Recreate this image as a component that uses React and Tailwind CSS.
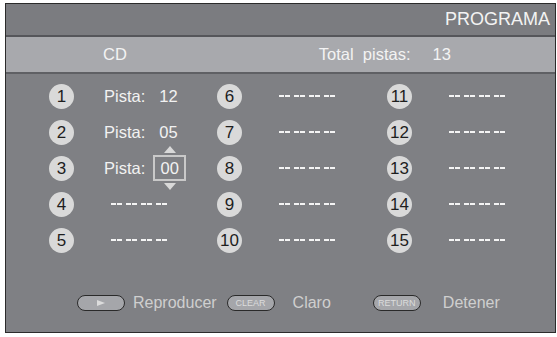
import React from "react";

const font = { fontFamily: '"Liberation Sans", Arial, sans-serif' };

function Circle({ n }) {
  return (
    <div className="w-[25px] h-[25px] rounded-full bg-[#d9d9d9] flex items-center justify-center text-[#1e1e1e] text-[17px] leading-none shrink-0">
      {n}
    </div>
  );
}

function Dashes() {
  return (
    <div className="flex gap-[4px] items-center">
      {[0, 1, 2, 3].map((i) => (
        <div key={i} className="flex gap-[1px]">
          <div className="w-[5px] h-[2px] bg-[#f4f4f4]" />
          <div className="w-[5px] h-[2px] bg-[#f4f4f4]" />
        </div>
      ))}
    </div>
  );
}

function Cell({ n, children, gap = "gap-[37px]" }) {
  return (
    <div className={`flex items-center h-[36px] ${gap}`}>
      <Circle n={n} />
      {children}
    </div>
  );
}

function Pill({ children, w }) {
  return (
    <div
      className={`h-[16px] ${w} rounded-full bg-[#a5a6aa] border border-[#2a2a2a] flex items-center justify-center text-[9px] text-[#dcdcdc] leading-none`}
    >
      {children}
    </div>
  );
}

export default function App() {
  const col1 = [
    <Cell key={1} n={1} gap="gap-[30px]">
      <div className="flex text-[#f2f2f2] text-[16.5px]">
        <span>Pista:</span>
        <span className="ml-[14px]">12</span>
      </div>
    </Cell>,
    <Cell key={2} n={2} gap="gap-[30px]">
      <div className="flex text-[#f2f2f2] text-[16.5px]">
        <span>Pista:</span>
        <span className="ml-[14px]">05</span>
      </div>
    </Cell>,
    <Cell key={3} n={3} gap="gap-[30px]">
      <div className="flex items-center text-[#f2f2f2] text-[16.5px]">
        <span>Pista:</span>
        <div className="relative ml-[8px] w-[33px] h-[26px] border-2 border-[#c9c9c9] flex items-center justify-center">
          <span>00</span>
          <div className="absolute left-1/2 -translate-x-1/2 -top-[11px] w-0 h-0 border-l-[6px] border-r-[6px] border-b-[7px] border-l-transparent border-r-transparent border-b-[#d9d9d9]" />
          <div className="absolute left-1/2 -translate-x-1/2 -bottom-[11px] w-0 h-0 border-l-[6px] border-r-[6px] border-t-[7px] border-l-transparent border-r-transparent border-t-[#d9d9d9]" />
        </div>
      </div>
    </Cell>,
    <Cell key={4} n={4}>
      <Dashes />
    </Cell>,
    <Cell key={5} n={5}>
      <Dashes />
    </Cell>,
  ];
  const colN = (start) =>
    [0, 1, 2, 3, 4].map((i) => (
      <Cell key={i} n={start + i}>
        <Dashes />
      </Cell>
    ));

  return (
    <div className="w-[557px] h-[337px] bg-white pt-[3px] pl-[5px]" style={font}>
      <div className="w-[551px] h-[330px] border-[1.5px] border-[#2b2b2b] flex flex-col bg-[#7f8084]">
        <div className="h-[33px] bg-[#7b7c80] border-b-2 border-[#55565a] flex items-center justify-end pr-[5px]">
          <span className="text-[18px] text-[#f3f3f3]">PROGRAMA</span>
        </div>
        <div className="h-[37px] bg-[#a8a9ad] border-b-2 border-[#5f6064] flex items-center text-[16.5px] text-[#f3f3f3]">
          <span className="ml-[97px]">CD</span>
          <span className="ml-[192px]">Total&nbsp; pistas:</span>
          <span className="ml-[22px]">13</span>
        </div>
        <div className="flex pt-[4px] pl-[43px]">
          <div className="w-[168px] flex flex-col">{col1}</div>
          <div className="w-[170px] flex flex-col">{colN(6)}</div>
          <div className="flex flex-col">{colN(11)}</div>
        </div>
        <div className="flex items-center mt-[33px] pl-[71px] text-[16px] text-[#cfcfcf]">
          <Pill w="w-[48px]">
            <div className="w-0 h-0 border-t-[3px] border-b-[3px] border-l-[8px] border-t-transparent border-b-transparent border-l-[#dcdcdc]" />
          </Pill>
          <span className="ml-[8px]">Reproducer</span>
          <div className="ml-[10px]">
            <Pill w="w-[48px]">CLEAR</Pill>
          </div>
          <span className="ml-[18px]">Claro</span>
          <div className="ml-[42px]">
            <Pill w="w-[48px]">RETURN</Pill>
          </div>
          <span className="ml-[22px]">Detener</span>
        </div>
      </div>
    </div>
  );
}
